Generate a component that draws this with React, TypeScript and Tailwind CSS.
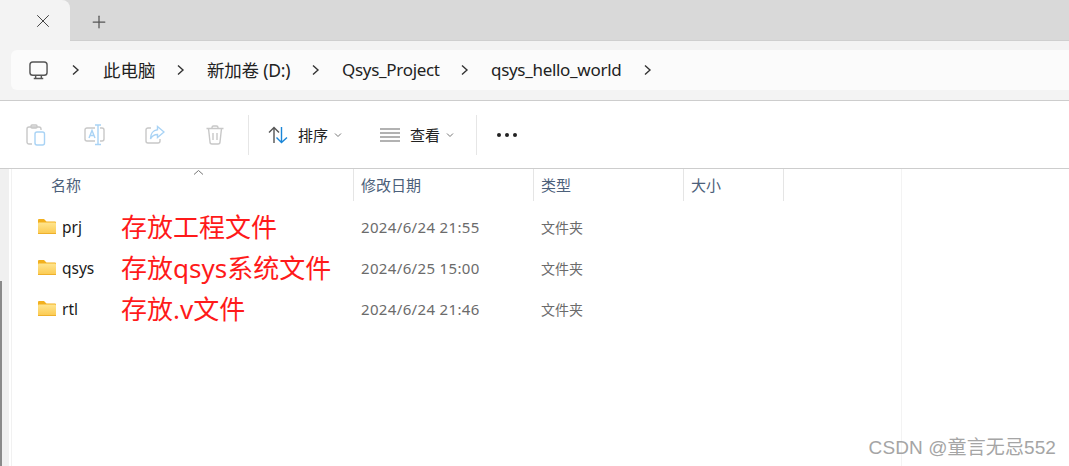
import { Plus, X } from "lucide-react"

const cjk = "font-['Noto_Sans','Noto_Sans_CJK_SC',sans-serif]"

const Chevron = () => (
    <svg width="10" height="14" viewBox="0 0 10 14" fill="none" stroke="#333" strokeWidth="1.4">
        <path d="M2 2.5 L7 7 L2 11.5" />
    </svg>
)

const SmallChevron = () => (
    <svg width="8" height="6" viewBox="0 0 8 6" fill="none" stroke="#777" strokeWidth="1">
        <path d="M1 1.5 L4 4.5 L7 1.5" />
    </svg>
)

const Monitor = () => (
    <svg width="19" height="19" viewBox="0 0 20 20" fill="none" stroke="#555" strokeWidth="1.5">
        <rect x="1" y="1" width="18" height="14" rx="3" />
        <path d="M7 15 V18 M13 15 V18 M5 18.5 H15" />
    </svg>
)

const Paste = () => (
    <svg width="20" height="22" viewBox="0 0 20 22" fill="none" strokeWidth="1.4">
        <path d="M6 20 H3 a2 2 0 0 1 -2 -2 V5 a2 2 0 0 1 2 -2 H13 a2 2 0 0 1 2 2 V6" stroke="#c8c8c8" />
        <rect x="5" y="1" width="6" height="3" rx="1" stroke="#c8c8c8" />
        <rect x="9" y="8" width="9.5" height="13" rx="2" stroke="#a9d3f5" />
    </svg>
)

const Rename = () => (
    <svg width="22" height="22" viewBox="0 0 22 22" fill="none" strokeWidth="1.4">
        <path d="M11 4 H3 a2 2 0 0 0 -2 2 V15 a2 2 0 0 0 2 2 H11" stroke="#c8c8c8" />
        <path d="M16 4 H18 a2 2 0 0 1 2 2 V15 a2 2 0 0 1 -2 2 H16" stroke="#c8c8c8" />
        <path d="M11 1 H17 M14 1 V20.5 M11 20.5 H17" stroke="#a9d3f5" />
        <path d="M5 14 L8 6.5 L11 14 M6 11.5 H10" stroke="#a9d3f5" />
    </svg>
)

const Share = () => (
    <svg width="20" height="20" viewBox="0 0 20 20" fill="none" strokeWidth="1.4">
        <path d="M6 3 H3 a2 2 0 0 0 -2 2 V16 a2 2 0 0 0 2 2 H13 a2 2 0 0 0 2 -2 V14" stroke="#c8c8c8" />
        <path d="M12.5 1.5 L19 7 L12.5 12.5 V9.5 C9 9.5 7 11 5.5 14 C5.5 9 8 5 12.5 4.7 Z" stroke="#a9d3f5" />
    </svg>
)

const Trash = () => (
    <svg width="18" height="20" viewBox="0 0 18 20" fill="none" stroke="#c8c8c8" strokeWidth="1.4">
        <path d="M0.5 3.5 H17.5 M6 3.5 V2.5 a1.5 1.5 0 0 1 1.5 -1.5 H10.5 a1.5 1.5 0 0 1 1.5 1.5 V3.5" />
        <path d="M2.5 3.5 L4 17 a2 2 0 0 0 2 2 H12 a2 2 0 0 0 2 -2 L15.5 3.5" />
        <path d="M7 8 V15 M11 8 V15" />
    </svg>
)

const SortIcon = () => (
    <svg width="20" height="18" viewBox="0 0 20 18" fill="none" strokeWidth="1.4">
        <path d="M6 17 V1.5 M1 6.5 L6 1.5 L11 6.5" stroke="#555" />
        <path d="M13.5 1 V16.5 M8.5 11.5 L13.5 16.5 L19 11.5" stroke="#1a86d8" />
    </svg>
)

const ViewIcon = () => (
    <svg width="20" height="14" viewBox="0 0 20 14" fill="none" stroke="#666" strokeWidth="1.2">
        <path d="M0 1 H20 M0 5 H20 M0 9 H20 M0 13 H20" />
    </svg>
)

const Folder = () => (
    <svg width="18" height="15" viewBox="0 0 18 15">
        <defs>
            <linearGradient id="folderFill" x1="0" y1="0" x2="0" y2="1">
                <stop offset="0" stopColor="#ffe58f" />
                <stop offset="1" stopColor="#fbc94e" />
            </linearGradient>
        </defs>
        <path d="M0 1 a1 1 0 0 1 1 -1 H6 L8.5 2.5 H17 a1 1 0 0 1 1 1 V5 H0 Z" fill="#f2b01e" />
        <rect x="0" y="3.5" width="18" height="11.5" rx="1" fill="url(#folderFill)" />
        <rect x="0" y="14" width="18" height="1" fill="#eeb02c" />
    </svg>
)

const crumbs = [
    { label: "此电脑", box: "ml-[22px] w-[54px] text-[17.5px]", gap: "ml-[19px]" },
    { label: "新加卷 (D:)", box: "ml-[21px] w-[85px] text-[17.5px] tracking-[-0.2px]", gap: "ml-[19px]" },
    { label: "Qsys_Project", box: "ml-[21px] w-[98px] text-[17px] tracking-[-0.3px]", gap: "ml-[20px]" },
    { label: "qsys_hello_world", box: "ml-[21px] w-[130px] text-[17px] tracking-[-0.3px]", gap: "ml-[22px]" },
]

const columns = [
    { label: "修改日期", width: "w-[180px]" },
    { label: "类型", width: "w-[150px]" },
    { label: "大小", width: "w-[100px]" },
]

const rows = [
    { name: "prj", note: "存放工程文件", date: "2024/6/24 21:55" },
    { name: "qsys", note: "存放qsys系统文件", date: "2024/6/25 15:00" },
    { name: "rtl", note: "存放.v文件", date: "2024/6/24 21:46" },
]

const App = () => {
    return (
        <div className={`w-[1069px] h-[466px] overflow-hidden bg-white flex flex-col relative ${cjk}`}>
            {/* tabs */}
            <div className="h-[41px] shrink-0 bg-[#d9d9d9] flex items-start border-b border-[#cfcfcf]">
                <div className="w-[70px] h-[41px] bg-[#f3f3f3] rounded-tr-lg flex items-center justify-end pr-[16px] pt-[1px]">
                    <X size={22} strokeWidth={1} color="#333" />
                </div>
                <div className="ml-[19px] h-[41px] flex items-center pt-[2px]">
                    <Plus size={20} strokeWidth={1.5} color="#555" />
                </div>
            </div>

            {/* address bar */}
            <div className="h-[60px] shrink-0 bg-[#f3f3f3] border-b border-[#cdcdcd] pt-[9px] pl-[11px]">
                <div className="w-[1058px] h-[40px] bg-[#fbfbfb] rounded-l-md flex items-center pl-[18px] text-[#222]">
                    <Monitor />
                    <div className="ml-[23px] flex items-center"><Chevron /></div>
                    {crumbs.map(c => (
                        <div key={c.label} className="flex items-center">
                            <span className={`${c.box} whitespace-nowrap`}>{c.label}</span>
                            <span className={`${c.gap} flex items-center`}><Chevron /></span>
                        </div>
                    ))}
                </div>
            </div>

            {/* toolbar */}
            <div className="h-[68px] shrink-0 bg-white border-b border-[#cdcdcd] flex items-center pl-[26px] pt-[1px]">
                <Paste />
                <span className="ml-[38px]"><Rename /></span>
                <span className="ml-[39px]"><Share /></span>
                <span className="ml-[41px]"><Trash /></span>
                <div className="ml-[24px] w-px h-[40px] bg-[#e6e6e6]" />
                <span className="ml-[19px]"><SortIcon /></span>
                <span className="ml-[10px] text-[15px] text-[#222]">排序</span>
                <span className="ml-[6px]"><SmallChevron /></span>
                <span className="ml-[38px]"><ViewIcon /></span>
                <span className="ml-[10px] text-[15px] text-[#222]">查看</span>
                <span className="ml-[6px]"><SmallChevron /></span>
                <div className="ml-[22px] w-px h-[40px] bg-[#e6e6e6]" />
                <div className="ml-[20px] flex gap-[4px]">
                    <span className="size-[4px] rounded-full bg-[#222]" />
                    <span className="size-[4px] rounded-full bg-[#222]" />
                    <span className="size-[4px] rounded-full bg-[#222]" />
                </div>
            </div>

            {/* content */}
            <div className="flex-1 flex min-h-0">
                <div className="w-[9px] shrink-0 bg-[#f0f0f0] flex flex-col justify-end">
                    <div className="w-[2px] h-[185px] bg-[#8a8a8a]" />
                </div>
                <div className="w-[3px] shrink-0 bg-white border-r border-[#f1f1f1]" />
                <div className="w-[890px] shrink-0 border-r border-[#f3f3f3] relative">
                    <div className="flex h-[32px] text-[15px] text-[#4c607a]">
                        <div className="w-[341px] pl-[39px] pt-[5px]">名称</div>
                        {columns.map(c => (
                            <div key={c.label} className={`${c.width} border-l border-[#e5e5e5] pl-[7px] pt-[5px]`}>{c.label}</div>
                        ))}
                        <div className="border-l border-[#e5e5e5]" />
                    </div>
                    <svg className="absolute left-[181px] top-[0px]" width="11" height="6" viewBox="0 0 11 6" fill="none" stroke="#777" strokeWidth="1">
                        <path d="M1 5.5 L5.5 1.5 L10 5.5" />
                    </svg>
                    <div className="pt-[7px] flex flex-col">
                        {rows.map(r => (
                            <div key={r.name} className="h-[41px] flex items-center">
                                <div className="w-[24px] ml-[26px] -mt-[4px] flex"><Folder /></div>
                                <span className="w-[59px] -mt-[1px] text-[15.5px] text-[#1a1a1a]">{r.name}</span>
                                <span className="w-[240px] -mt-[2px] text-[26px] text-[#ff1a1a] whitespace-nowrap">{r.note}</span>
                                <span className="w-[180px] -mt-[2px] text-[15px] tracking-[0.35px] text-[#6b6b6b]">{r.date}</span>
                                <span className="-mt-[2px] text-[14px] text-[#6b6b6b]">文件夹</span>
                            </div>
                        ))}
                    </div>
                </div>
            </div>

            {/* watermark */}
            <div className="absolute right-[13px] bottom-[4px] text-[19px] tracking-[0.1px] text-[#a5a5a5] font-['Liberation_Sans','Noto_Sans_CJK_SC',sans-serif] whitespace-nowrap">
                CSDN @童言无忌552
            </div>
        </div>
    )
}

export default App
